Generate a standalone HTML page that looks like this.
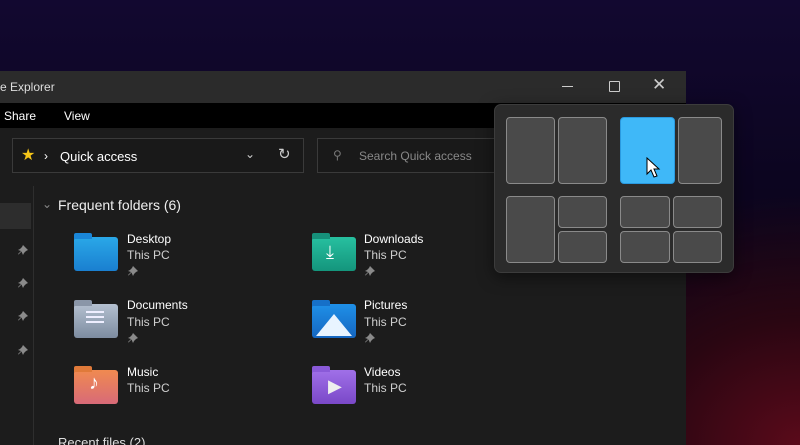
<!DOCTYPE html>
<html style="overflow:hidden;width:800px;height:445px"><head><style>
body{margin:0;width:800px;height:445px;overflow:hidden;position:relative;font-family:"Liberation Sans",sans-serif;
background:radial-gradient(ellipse 300px 250px at 800px 445px,#5a0a1a 0%,#2a0612 50%,transparent 100%),linear-gradient(180deg,#120830 0%,#0c0520 40%,#0b0510 100%);}
.a{position:absolute}
.win{left:0;top:71px;width:686px;height:374px;background:#1c1c1c;}
.t{color:#fff;font-size:12px}
.tile{position:absolute;background:#4a4a4a;border:1.5px solid #8a8a8a;border-radius:4px;box-sizing:border-box}
.fold{position:absolute;width:44px;height:34px;border-radius:3px}
.tab{position:absolute;width:18px;height:6px;border-radius:2px 2px 0 0}
.name{position:absolute;color:#fff;font-size:12px}
.sub{position:absolute;color:#cfcfcf;font-size:12px}
.pin{position:absolute;width:10px;height:10px}
</style></head><body>
<svg width="0" height="0" style="position:absolute"><defs><symbol id="p" viewBox="0 0 10 10"><path d="M5 0 L10 5 L8 6 L6 8 L5 10 L3.5 6.5 L0.5 9.5 L0 9 L3 6 L0 5 L2 4 L4 2 Z" fill="#8a8a8a"/></symbol></defs></svg>
<div class="a win"></div>
<div class="a" style="left:0;top:71px;width:686px;height:32px;background:#2b2b2b"></div>
<div class="a t" style="left:0;top:80px;color:#ddd">e Explorer</div>
<div class="a" style="left:562px;top:86px;width:11px;height:1px;background:#ccc"></div>
<div class="a" style="left:609px;top:81px;width:9px;height:9px;border:1px solid #ccc;border-radius:1px"></div>
<div class="a" style="left:652px;top:75px;color:#ccc;font-size:17px">✕</div>
<div class="a" style="left:0;top:103px;width:686px;height:25px;background:#000"></div>
<div class="a t" style="left:4px;top:109px">Share</div>
<div class="a t" style="left:64px;top:109px">View</div>
<div class="a" style="left:12px;top:138px;width:292px;height:35px;border:1px solid #3a3a3a;background:#191919;box-sizing:border-box"></div>
<div class="a" style="left:21px;top:145px;color:#f5c518;font-size:16px">★</div>
<div class="a t" style="left:44px;top:149px">›</div>
<div class="a t" style="left:60px;top:149px;font-size:13px">Quick access</div>
<div class="a" style="left:245px;top:147px;color:#ccc;font-size:12px">⌄</div>
<div class="a" style="left:278px;top:145px;color:#ccc;font-size:15px">↻</div>
<div class="a" style="left:317px;top:138px;width:200px;height:35px;border:1px solid #3a3a3a;background:#191919;box-sizing:border-box"></div>
<div class="a" style="left:333px;top:148px;color:#777;font-size:12px">⚲</div>
<div class="a" style="left:359px;top:149px;color:#888;font-size:12px">Search Quick access</div>
<div class="a" style="left:33px;top:186px;width:1px;height:259px;background:#2e2e2e"></div>
<div class="a" style="left:0;top:203px;width:31px;height:26px;background:#2d2d2d"></div>
<svg class="pin" style="left:18px;top:245px"><use href="#p"/></svg>
<svg class="pin" style="left:18px;top:278px"><use href="#p"/></svg>
<svg class="pin" style="left:18px;top:311px"><use href="#p"/></svg>
<svg class="pin" style="left:18px;top:345px"><use href="#p"/></svg>
<div class="a" style="left:42px;top:197px;color:#888;font-size:12px">⌄</div>
<div class="a" style="left:58px;top:197px;color:#eee;font-size:14px">Frequent folders (6)</div>

<div class="fold" style="left:74px;top:237px;background:linear-gradient(#2aa8e8,#1a7fd0)"></div><div class="tab" style="left:74px;top:233px;background:#1a86d8"></div>
<div class="name" style="left:127px;top:232px">Desktop</div><div class="sub" style="left:127px;top:248px">This PC</div><svg class="pin" style="left:128px;top:266px"><use href="#p"/></svg>
<div class="fold" style="left:312px;top:237px;background:linear-gradient(#27c0a0,#14957c)"></div><div class="tab" style="left:312px;top:233px;background:#16907a"></div>
<div class="a" style="left:326px;top:242px;color:#fff;font-size:18px">⤓</div>
<div class="name" style="left:364px;top:232px">Downloads</div><div class="sub" style="left:364px;top:248px">This PC</div><svg class="pin" style="left:365px;top:266px"><use href="#p"/></svg>

<div class="fold" style="left:74px;top:304px;background:linear-gradient(#b4c0d0,#7d8ca0)"></div><div class="tab" style="left:74px;top:300px;background:#8a96a8"></div>
<div class="a" style="left:86px;top:311px;width:18px;height:2px;background:#eef;box-shadow:0 5px #eef,0 10px #eef"></div>
<div class="name" style="left:127px;top:298px">Documents</div><div class="sub" style="left:127px;top:315px">This PC</div><svg class="pin" style="left:128px;top:333px"><use href="#p"/></svg>
<div class="fold" style="left:312px;top:304px;background:linear-gradient(#1f90e8,#1566c0)"></div><div class="tab" style="left:312px;top:300px;background:#1670c8"></div>
<div class="a" style="left:316px;top:314px;width:0;height:0;border-left:18px solid transparent;border-right:18px solid transparent;border-bottom:22px solid #e8f4ff"></div>
<div class="name" style="left:364px;top:298px">Pictures</div><div class="sub" style="left:364px;top:315px">This PC</div><svg class="pin" style="left:365px;top:333px"><use href="#p"/></svg>

<div class="fold" style="left:74px;top:370px;background:linear-gradient(#f08a50,#d86a78)"></div><div class="tab" style="left:74px;top:366px;background:#e07a3a"></div>
<div class="a" style="left:89px;top:372px;color:#fff;font-size:20px">♪</div>
<div class="name" style="left:127px;top:365px">Music</div><div class="sub" style="left:127px;top:381px">This PC</div>
<div class="fold" style="left:312px;top:370px;background:linear-gradient(#a070e8,#7a48c8)"></div><div class="tab" style="left:312px;top:366px;background:#8a5ad8"></div>
<div class="a" style="left:328px;top:376px;color:#eee;font-size:18px">▶</div>
<div class="name" style="left:364px;top:365px">Videos</div><div class="sub" style="left:364px;top:381px">This PC</div>
<div class="a" style="left:58px;top:436px;color:#ddd;font-size:13px;line-height:13px">Recent files (2)</div>

<div class="a" style="left:494px;top:104px;width:240px;height:169px;background:#2b2b2b;border:1px solid #3c3c3c;border-radius:7px;box-sizing:border-box;box-shadow:0 4px 16px rgba(0,0,0,.5)"></div>
<div class="tile" style="left:506px;top:117px;width:49px;height:67px"></div>
<div class="tile" style="left:558px;top:117px;width:49px;height:67px"></div>
<div class="tile" style="left:620px;top:117px;width:55px;height:67px;background:#3fb8f8;border-color:#2a9ae0"></div>
<div class="tile" style="left:678px;top:117px;width:44px;height:67px"></div>
<div class="tile" style="left:506px;top:196px;width:49px;height:67px"></div>
<div class="tile" style="left:558px;top:196px;width:49px;height:32px"></div>
<div class="tile" style="left:558px;top:231px;width:49px;height:32px"></div>
<div class="tile" style="left:620px;top:196px;width:50px;height:32px"></div>
<div class="tile" style="left:673px;top:196px;width:49px;height:32px"></div>
<div class="tile" style="left:620px;top:231px;width:50px;height:32px"></div>
<div class="tile" style="left:673px;top:231px;width:49px;height:32px"></div>
<svg class="a" style="left:646px;top:157px" width="16" height="22" viewBox="0 0 16 22"><path d="M1 1 L1 17 L5 13 L8 20 L11 19 L8 12 L13 12 Z" fill="#fff" stroke="#000" stroke-width="1"/></svg>
</body></html>
